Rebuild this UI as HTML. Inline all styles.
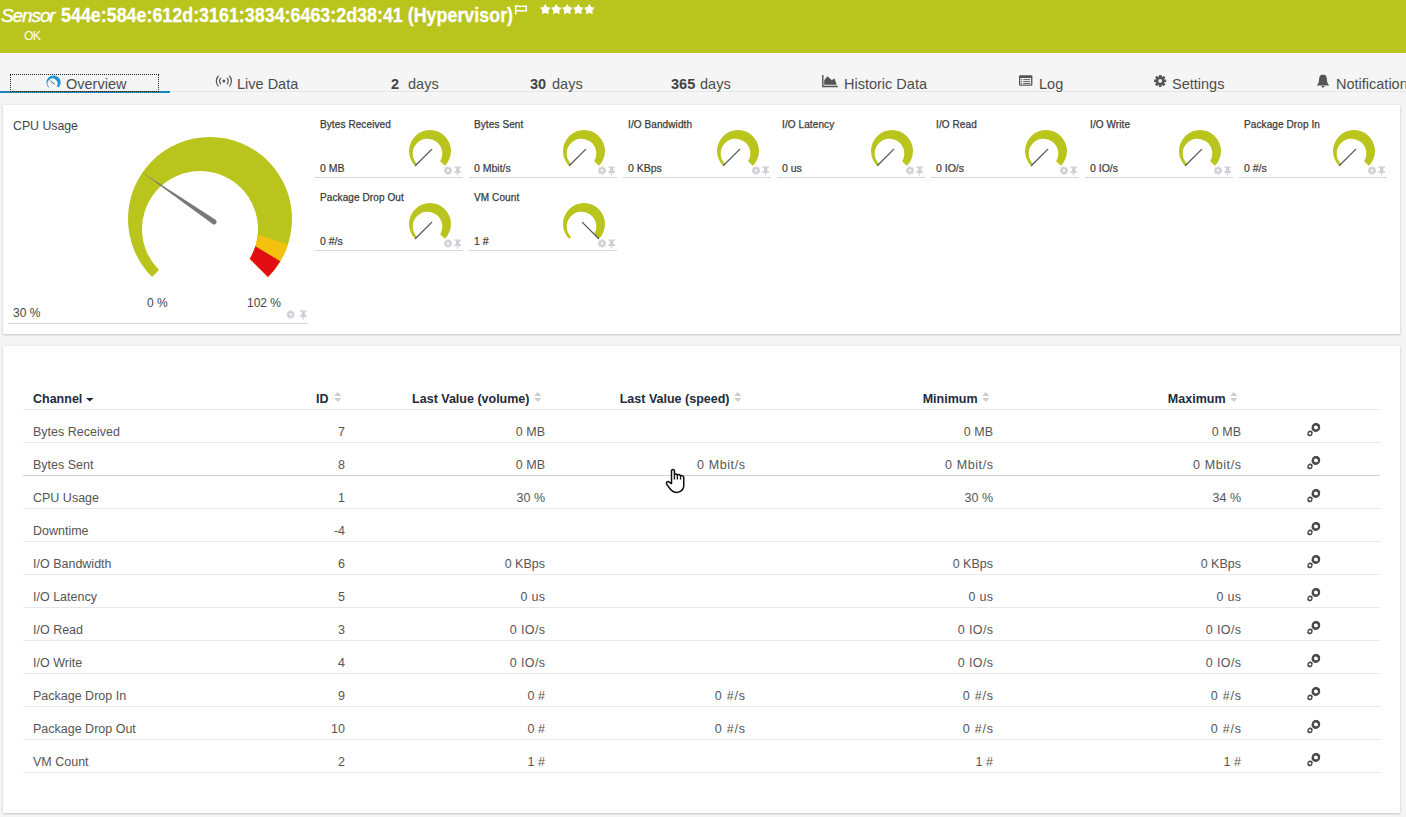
<!DOCTYPE html>
<html><head><meta charset="utf-8">
<style>
*{box-sizing:border-box}
html,body{margin:0;padding:0;width:1406px;height:817px;overflow:hidden;background:#f5f5f5;font-family:"Liberation Sans",sans-serif}
.abs{position:absolute;white-space:nowrap}
#hdr{position:absolute;left:0;top:0;width:1406px;height:53px;background:#b9c41c}
#tabs{position:absolute;left:0;top:53px;width:1406px;height:39px;background:#f5f5f5;border-bottom:1px solid #e6e6e6}
.tab{position:absolute;top:76px;font-size:14.5px;color:#4d4d4d;line-height:16px;white-space:nowrap}
.tab b{color:#444}
.panel{position:absolute;background:#fff;box-shadow:0 1px 2px rgba(0,0,0,0.17),0 0 3px rgba(0,0,0,0.07)}
.gt{position:absolute;font-size:10px;color:#3a3a3a;line-height:12px;white-space:nowrap;-webkit-text-stroke:0.25px #3a3a3a;letter-spacing:0.1px}
.gv{position:absolute;font-size:10.5px;color:#3a3a3a;line-height:12px;white-space:nowrap;-webkit-text-stroke:0.2px #3a3a3a}
.gl{position:absolute;height:1px;background:#d5d5d5}
.th{position:absolute;font-size:12.5px;font-weight:bold;color:#222b3b;line-height:14px;white-space:nowrap}
.td{position:absolute;font-size:12.5px;color:#555;line-height:14px;white-space:nowrap}
.hl{position:absolute;left:23px;width:1357px;height:1px;background:#e8e8e8}
svg{position:absolute;left:0;top:0}
</style></head><body>
<div id="hdr">
  <div class="abs" style="left:1px;top:4.5px;font-size:19px;letter-spacing:-1.1px;font-style:italic;color:#fff;line-height:22px;-webkit-text-stroke:0.35px #fff">Sensor</div>
  <div class="abs" id="ttl" style="left:61px;top:3px;font-size:19.5px;font-weight:bold;color:#fff;line-height:24px;transform-origin:0 0;transform:scaleX(0.9165);-webkit-text-stroke:0.3px #fff">544e:584e:612d:3161:3834:6463:2d38:41 (Hypervisor)</div>
  <div class="abs" style="left:24px;top:29px;font-size:12.3px;letter-spacing:-0.7px;color:#fff;line-height:14px">OK</div>
</div>
<div id="tabs"></div>
<div style="position:absolute;left:0;top:91px;width:170px;height:2px;background:#1a85b8"></div>
<div style="position:absolute;left:10px;top:74px;width:149px;height:18px;border:1px dotted #222"></div>
<div class="tab" style="left:66px">Overview</div>
<div class="tab" style="left:237px">Live Data</div>
<div class="tab" style="left:391px"><b>2</b></div><div class="tab" style="left:408px">days</div>
<div class="tab" style="left:530px"><b>30</b></div><div class="tab" style="left:552px">days</div>
<div class="tab" style="left:671px"><b>365</b></div><div class="tab" style="left:700px">days</div>
<div class="tab" style="left:844px">Historic Data</div>
<div class="tab" style="left:1039px">Log</div>
<div class="tab" style="left:1172px">Settings</div>
<div class="tab" style="left:1336px">Notifications</div>
<div class="panel" style="left:3px;top:105px;width:1397px;height:229px"></div>
<div class="panel" style="left:3px;top:346px;width:1397px;height:467px"></div>
<div class="abs" style="left:13px;top:119px;font-size:12.3px;color:#444;line-height:14px">CPU Usage</div>
<div class="abs" style="left:147px;top:296px;font-size:12px;color:#444;line-height:14px">0 %</div>
<div class="abs" style="left:247px;top:296px;font-size:12px;color:#444;line-height:14px">102 %</div>
<div class="abs" style="left:13px;top:306px;font-size:12px;color:#444;line-height:14px">30 %</div>
<div class="gl" style="left:8px;top:323px;width:300px"></div>
<div class="gt" style="left:320px;top:119px">Bytes Received</div><div class="gv" style="left:320px;top:162px">0 MB</div><div class="gl" style="left:315px;top:177px;width:148px"></div><div class="gt" style="left:474px;top:119px">Bytes Sent</div><div class="gv" style="left:474px;top:162px">0 Mbit/s</div><div class="gl" style="left:469px;top:177px;width:148px"></div><div class="gt" style="left:628px;top:119px">I/O Bandwidth</div><div class="gv" style="left:628px;top:162px">0 KBps</div><div class="gl" style="left:623px;top:177px;width:148px"></div><div class="gt" style="left:782px;top:119px">I/O Latency</div><div class="gv" style="left:782px;top:162px">0 us</div><div class="gl" style="left:777px;top:177px;width:148px"></div><div class="gt" style="left:936px;top:119px">I/O Read</div><div class="gv" style="left:936px;top:162px">0 IO/s</div><div class="gl" style="left:931px;top:177px;width:148px"></div><div class="gt" style="left:1090px;top:119px">I/O Write</div><div class="gv" style="left:1090px;top:162px">0 IO/s</div><div class="gl" style="left:1085px;top:177px;width:148px"></div><div class="gt" style="left:1244px;top:119px">Package Drop In</div><div class="gv" style="left:1244px;top:162px">0 #/s</div><div class="gl" style="left:1239px;top:177px;width:148px"></div><div class="gt" style="left:320px;top:192px">Package Drop Out</div><div class="gv" style="left:320px;top:235px">0 #/s</div><div class="gl" style="left:315px;top:250px;width:148px"></div><div class="gt" style="left:474px;top:192px">VM Count</div><div class="gv" style="left:474px;top:235px">1 #</div><div class="gl" style="left:469px;top:250px;width:148px"></div>
<div class="td" style="left:33px;top:425px">Bytes Received</div><div class="td r" style="right:1061px;top:425px">7</div><div class="td r" style="right:861px;top:425px">0 MB</div><div class="td r" style="right:413px;top:425px">0 MB</div><div class="td r" style="right:165px;top:425px">0 MB</div><div class="hl" style="top:442px"></div><div class="td" style="left:33px;top:458px">Bytes Sent</div><div class="td r" style="right:1061px;top:458px">8</div><div class="td r" style="right:861px;top:458px">0 MB</div><div class="td r" style="right:660.4px;top:458px;letter-spacing:0.6px">0 Mbit/s</div><div class="td r" style="right:412.4px;top:458px;letter-spacing:0.6px">0 Mbit/s</div><div class="td r" style="right:164.4px;top:458px;letter-spacing:0.6px">0 Mbit/s</div><div class="hl" style="top:475px;background:#cfcfcf"></div><div class="td" style="left:33px;top:491px">CPU Usage</div><div class="td r" style="right:1061px;top:491px">1</div><div class="td r" style="right:861px;top:491px">30 %</div><div class="td r" style="right:413px;top:491px">30 %</div><div class="td r" style="right:165px;top:491px">34 %</div><div class="hl" style="top:508px"></div><div class="td" style="left:33px;top:524px">Downtime</div><div class="td r" style="right:1061px;top:524px">-4</div><div class="hl" style="top:541px"></div><div class="td" style="left:33px;top:557px">I/O Bandwidth</div><div class="td r" style="right:1061px;top:557px">6</div><div class="td r" style="right:861px;top:557px">0 KBps</div><div class="td r" style="right:413px;top:557px">0 KBps</div><div class="td r" style="right:165px;top:557px">0 KBps</div><div class="hl" style="top:574px"></div><div class="td" style="left:33px;top:590px">I/O Latency</div><div class="td r" style="right:1061px;top:590px">5</div><div class="td r" style="right:860.7px;top:590px;letter-spacing:0.3px">0 us</div><div class="td r" style="right:412.7px;top:590px;letter-spacing:0.3px">0 us</div><div class="td r" style="right:164.7px;top:590px;letter-spacing:0.3px">0 us</div><div class="hl" style="top:607px"></div><div class="td" style="left:33px;top:623px">I/O Read</div><div class="td r" style="right:1061px;top:623px">3</div><div class="td r" style="right:860.6px;top:623px;letter-spacing:0.4px">0 IO/s</div><div class="td r" style="right:412.6px;top:623px;letter-spacing:0.4px">0 IO/s</div><div class="td r" style="right:164.6px;top:623px;letter-spacing:0.4px">0 IO/s</div><div class="hl" style="top:640px"></div><div class="td" style="left:33px;top:656px">I/O Write</div><div class="td r" style="right:1061px;top:656px">4</div><div class="td r" style="right:860.6px;top:656px;letter-spacing:0.4px">0 IO/s</div><div class="td r" style="right:412.6px;top:656px;letter-spacing:0.4px">0 IO/s</div><div class="td r" style="right:164.6px;top:656px;letter-spacing:0.4px">0 IO/s</div><div class="hl" style="top:673px"></div><div class="td" style="left:33px;top:689px">Package Drop In</div><div class="td r" style="right:1061px;top:689px">9</div><div class="td r" style="right:861px;top:689px">0 #</div><div class="td r" style="right:660.2px;top:689px;letter-spacing:0.8px">0 #/s</div><div class="td r" style="right:412.2px;top:689px;letter-spacing:0.8px">0 #/s</div><div class="td r" style="right:164.2px;top:689px;letter-spacing:0.8px">0 #/s</div><div class="hl" style="top:706px"></div><div class="td" style="left:33px;top:722px">Package Drop Out</div><div class="td r" style="right:1061px;top:722px">10</div><div class="td r" style="right:861px;top:722px">0 #</div><div class="td r" style="right:660.2px;top:722px;letter-spacing:0.8px">0 #/s</div><div class="td r" style="right:412.2px;top:722px;letter-spacing:0.8px">0 #/s</div><div class="td r" style="right:164.2px;top:722px;letter-spacing:0.8px">0 #/s</div><div class="hl" style="top:739px"></div><div class="td" style="left:33px;top:755px">VM Count</div><div class="td r" style="right:1061px;top:755px">2</div><div class="td r" style="right:861px;top:755px">1 #</div><div class="td r" style="right:413px;top:755px">1 #</div><div class="td r" style="right:165px;top:755px">1 #</div><div class="hl" style="top:772px"></div><div class="th r" style="right:1077.5px;top:392px">ID</div><div class="th r" style="right:876.5px;top:392px">Last Value (volume)</div><div class="th r" style="right:676.5px;top:392px">Last Value (speed)</div><div class="th r" style="right:428.5px;top:392px">Minimum</div><div class="th r" style="right:180.5px;top:392px">Maximum</div><div class="th" style="left:33px;top:392px">Channel</div><div class="hl" style="top:409px"></div>
<svg width="1406" height="817" viewBox="0 0 1406 817"><path d="M152.02,276.98 A82,82 0 1 1 267.98,276.98 L249.77,258.77 A58,58 0 1 0 158.99,270.01 Z" fill="#b9c41c"/><path d="M287.99,244.34 A82,82 0 0 1 267.98,276.98 L249.77,258.77 A58,58 0 0 0 257.74,234.51 Z" fill="#f3c10e"/><path d="M280.29,261.23 A82,82 0 0 1 267.98,276.98 L249.77,258.77 A58,58 0 0 0 255.37,246.26 Z" fill="#e30e13"/><path d="M141.53,172.09 L215.59,219.68 A2.6,2.6 0 0 1 212.66,223.97 Z" fill="#777"/><path d="M415.15,165.85 A21,21 0 1 1 444.85,165.85 L440.16,161.16 A14.8,14.8 0 1 0 417.03,163.97 Z" fill="#b9c41c"/><line x1="415.50" y1="165.50" x2="431.63" y2="149.37" stroke="#555" stroke-width="1.3" stroke-linecap="round"/><rect x="446.90" y="166.50" width="2.2" height="8.00" fill="#d0d0d6" transform="rotate(0 448 170.5)"/><rect x="446.90" y="166.50" width="2.2" height="8.00" fill="#d0d0d6" transform="rotate(45 448 170.5)"/><rect x="446.90" y="166.50" width="2.2" height="8.00" fill="#d0d0d6" transform="rotate(90 448 170.5)"/><rect x="446.90" y="166.50" width="2.2" height="8.00" fill="#d0d0d6" transform="rotate(135 448 170.5)"/><circle cx="448" cy="170.5" r="2.72" fill="#d0d0d6"/><circle cx="448" cy="170.5" r="1.20" fill="#fff"/><path d="M454.0,166.5 h7 v1.2 h-1.6 v3 l1.8,1.4 v1 h-7 v-1 l1.8,-1.4 v-3 h-1.6 z M456.9,172.1 h1.2 v3.4 h-1.2 z" fill="#d0d0d6"/><path d="M569.15,165.85 A21,21 0 1 1 598.85,165.85 L594.16,161.16 A14.8,14.8 0 1 0 571.03,163.97 Z" fill="#b9c41c"/><line x1="569.50" y1="165.50" x2="585.63" y2="149.37" stroke="#555" stroke-width="1.3" stroke-linecap="round"/><rect x="600.90" y="166.50" width="2.2" height="8.00" fill="#d0d0d6" transform="rotate(0 602 170.5)"/><rect x="600.90" y="166.50" width="2.2" height="8.00" fill="#d0d0d6" transform="rotate(45 602 170.5)"/><rect x="600.90" y="166.50" width="2.2" height="8.00" fill="#d0d0d6" transform="rotate(90 602 170.5)"/><rect x="600.90" y="166.50" width="2.2" height="8.00" fill="#d0d0d6" transform="rotate(135 602 170.5)"/><circle cx="602" cy="170.5" r="2.72" fill="#d0d0d6"/><circle cx="602" cy="170.5" r="1.20" fill="#fff"/><path d="M608.0,166.5 h7 v1.2 h-1.6 v3 l1.8,1.4 v1 h-7 v-1 l1.8,-1.4 v-3 h-1.6 z M610.9,172.1 h1.2 v3.4 h-1.2 z" fill="#d0d0d6"/><path d="M723.15,165.85 A21,21 0 1 1 752.85,165.85 L748.16,161.16 A14.8,14.8 0 1 0 725.03,163.97 Z" fill="#b9c41c"/><line x1="723.50" y1="165.50" x2="739.63" y2="149.37" stroke="#555" stroke-width="1.3" stroke-linecap="round"/><rect x="754.90" y="166.50" width="2.2" height="8.00" fill="#d0d0d6" transform="rotate(0 756 170.5)"/><rect x="754.90" y="166.50" width="2.2" height="8.00" fill="#d0d0d6" transform="rotate(45 756 170.5)"/><rect x="754.90" y="166.50" width="2.2" height="8.00" fill="#d0d0d6" transform="rotate(90 756 170.5)"/><rect x="754.90" y="166.50" width="2.2" height="8.00" fill="#d0d0d6" transform="rotate(135 756 170.5)"/><circle cx="756" cy="170.5" r="2.72" fill="#d0d0d6"/><circle cx="756" cy="170.5" r="1.20" fill="#fff"/><path d="M762.0,166.5 h7 v1.2 h-1.6 v3 l1.8,1.4 v1 h-7 v-1 l1.8,-1.4 v-3 h-1.6 z M764.9,172.1 h1.2 v3.4 h-1.2 z" fill="#d0d0d6"/><path d="M877.15,165.85 A21,21 0 1 1 906.85,165.85 L902.16,161.16 A14.8,14.8 0 1 0 879.03,163.97 Z" fill="#b9c41c"/><line x1="877.50" y1="165.50" x2="893.63" y2="149.37" stroke="#555" stroke-width="1.3" stroke-linecap="round"/><rect x="908.90" y="166.50" width="2.2" height="8.00" fill="#d0d0d6" transform="rotate(0 910 170.5)"/><rect x="908.90" y="166.50" width="2.2" height="8.00" fill="#d0d0d6" transform="rotate(45 910 170.5)"/><rect x="908.90" y="166.50" width="2.2" height="8.00" fill="#d0d0d6" transform="rotate(90 910 170.5)"/><rect x="908.90" y="166.50" width="2.2" height="8.00" fill="#d0d0d6" transform="rotate(135 910 170.5)"/><circle cx="910" cy="170.5" r="2.72" fill="#d0d0d6"/><circle cx="910" cy="170.5" r="1.20" fill="#fff"/><path d="M916.0,166.5 h7 v1.2 h-1.6 v3 l1.8,1.4 v1 h-7 v-1 l1.8,-1.4 v-3 h-1.6 z M918.9,172.1 h1.2 v3.4 h-1.2 z" fill="#d0d0d6"/><path d="M1031.15,165.85 A21,21 0 1 1 1060.85,165.85 L1056.16,161.16 A14.8,14.8 0 1 0 1033.03,163.97 Z" fill="#b9c41c"/><line x1="1031.50" y1="165.50" x2="1047.63" y2="149.37" stroke="#555" stroke-width="1.3" stroke-linecap="round"/><rect x="1062.90" y="166.50" width="2.2" height="8.00" fill="#d0d0d6" transform="rotate(0 1064 170.5)"/><rect x="1062.90" y="166.50" width="2.2" height="8.00" fill="#d0d0d6" transform="rotate(45 1064 170.5)"/><rect x="1062.90" y="166.50" width="2.2" height="8.00" fill="#d0d0d6" transform="rotate(90 1064 170.5)"/><rect x="1062.90" y="166.50" width="2.2" height="8.00" fill="#d0d0d6" transform="rotate(135 1064 170.5)"/><circle cx="1064" cy="170.5" r="2.72" fill="#d0d0d6"/><circle cx="1064" cy="170.5" r="1.20" fill="#fff"/><path d="M1070.0,166.5 h7 v1.2 h-1.6 v3 l1.8,1.4 v1 h-7 v-1 l1.8,-1.4 v-3 h-1.6 z M1072.9,172.1 h1.2 v3.4 h-1.2 z" fill="#d0d0d6"/><path d="M1185.15,165.85 A21,21 0 1 1 1214.85,165.85 L1210.16,161.16 A14.8,14.8 0 1 0 1187.03,163.97 Z" fill="#b9c41c"/><line x1="1185.50" y1="165.50" x2="1201.63" y2="149.37" stroke="#555" stroke-width="1.3" stroke-linecap="round"/><rect x="1216.90" y="166.50" width="2.2" height="8.00" fill="#d0d0d6" transform="rotate(0 1218 170.5)"/><rect x="1216.90" y="166.50" width="2.2" height="8.00" fill="#d0d0d6" transform="rotate(45 1218 170.5)"/><rect x="1216.90" y="166.50" width="2.2" height="8.00" fill="#d0d0d6" transform="rotate(90 1218 170.5)"/><rect x="1216.90" y="166.50" width="2.2" height="8.00" fill="#d0d0d6" transform="rotate(135 1218 170.5)"/><circle cx="1218" cy="170.5" r="2.72" fill="#d0d0d6"/><circle cx="1218" cy="170.5" r="1.20" fill="#fff"/><path d="M1224.0,166.5 h7 v1.2 h-1.6 v3 l1.8,1.4 v1 h-7 v-1 l1.8,-1.4 v-3 h-1.6 z M1226.9,172.1 h1.2 v3.4 h-1.2 z" fill="#d0d0d6"/><path d="M1339.15,165.85 A21,21 0 1 1 1368.85,165.85 L1364.16,161.16 A14.8,14.8 0 1 0 1341.03,163.97 Z" fill="#b9c41c"/><line x1="1339.50" y1="165.50" x2="1355.63" y2="149.37" stroke="#555" stroke-width="1.3" stroke-linecap="round"/><rect x="1370.90" y="166.50" width="2.2" height="8.00" fill="#d0d0d6" transform="rotate(0 1372 170.5)"/><rect x="1370.90" y="166.50" width="2.2" height="8.00" fill="#d0d0d6" transform="rotate(45 1372 170.5)"/><rect x="1370.90" y="166.50" width="2.2" height="8.00" fill="#d0d0d6" transform="rotate(90 1372 170.5)"/><rect x="1370.90" y="166.50" width="2.2" height="8.00" fill="#d0d0d6" transform="rotate(135 1372 170.5)"/><circle cx="1372" cy="170.5" r="2.72" fill="#d0d0d6"/><circle cx="1372" cy="170.5" r="1.20" fill="#fff"/><path d="M1378.0,166.5 h7 v1.2 h-1.6 v3 l1.8,1.4 v1 h-7 v-1 l1.8,-1.4 v-3 h-1.6 z M1380.9,172.1 h1.2 v3.4 h-1.2 z" fill="#d0d0d6"/><path d="M415.15,238.85 A21,21 0 1 1 444.85,238.85 L440.16,234.16 A14.8,14.8 0 1 0 417.03,236.97 Z" fill="#b9c41c"/><line x1="415.50" y1="238.50" x2="431.63" y2="222.37" stroke="#555" stroke-width="1.3" stroke-linecap="round"/><rect x="446.90" y="239.50" width="2.2" height="8.00" fill="#d0d0d6" transform="rotate(0 448 243.5)"/><rect x="446.90" y="239.50" width="2.2" height="8.00" fill="#d0d0d6" transform="rotate(45 448 243.5)"/><rect x="446.90" y="239.50" width="2.2" height="8.00" fill="#d0d0d6" transform="rotate(90 448 243.5)"/><rect x="446.90" y="239.50" width="2.2" height="8.00" fill="#d0d0d6" transform="rotate(135 448 243.5)"/><circle cx="448" cy="243.5" r="2.72" fill="#d0d0d6"/><circle cx="448" cy="243.5" r="1.20" fill="#fff"/><path d="M454.0,239.5 h7 v1.2 h-1.6 v3 l1.8,1.4 v1 h-7 v-1 l1.8,-1.4 v-3 h-1.6 z M456.9,245.1 h1.2 v3.4 h-1.2 z" fill="#d0d0d6"/><path d="M569.15,238.85 A21,21 0 1 1 598.85,238.85 L594.16,234.16 A14.8,14.8 0 1 0 571.03,236.97 Z" fill="#b9c41c"/><line x1="598.50" y1="238.50" x2="582.37" y2="222.37" stroke="#555" stroke-width="1.3" stroke-linecap="round"/><rect x="600.90" y="239.50" width="2.2" height="8.00" fill="#d0d0d6" transform="rotate(0 602 243.5)"/><rect x="600.90" y="239.50" width="2.2" height="8.00" fill="#d0d0d6" transform="rotate(45 602 243.5)"/><rect x="600.90" y="239.50" width="2.2" height="8.00" fill="#d0d0d6" transform="rotate(90 602 243.5)"/><rect x="600.90" y="239.50" width="2.2" height="8.00" fill="#d0d0d6" transform="rotate(135 602 243.5)"/><circle cx="602" cy="243.5" r="2.72" fill="#d0d0d6"/><circle cx="602" cy="243.5" r="1.20" fill="#fff"/><path d="M608.0,239.5 h7 v1.2 h-1.6 v3 l1.8,1.4 v1 h-7 v-1 l1.8,-1.4 v-3 h-1.6 z M610.9,245.1 h1.2 v3.4 h-1.2 z" fill="#d0d0d6"/><rect x="289.50" y="310.50" width="2.2" height="8.00" fill="#d0d0d6" transform="rotate(0 290.6 314.5)"/><rect x="289.50" y="310.50" width="2.2" height="8.00" fill="#d0d0d6" transform="rotate(45 290.6 314.5)"/><rect x="289.50" y="310.50" width="2.2" height="8.00" fill="#d0d0d6" transform="rotate(90 290.6 314.5)"/><rect x="289.50" y="310.50" width="2.2" height="8.00" fill="#d0d0d6" transform="rotate(135 290.6 314.5)"/><circle cx="290.6" cy="314.5" r="2.72" fill="#d0d0d6"/><circle cx="290.6" cy="314.5" r="1.20" fill="#fff"/><path d="M299.7,310.5 h7 v1.2 h-1.6 v3 l1.8,1.4 v1 h-7 v-1 l1.8,-1.4 v-3 h-1.6 z M302.59999999999997,316.1 h1.2 v3.4 h-1.2 z" fill="#d0d0d6"/><circle cx="1315.9" cy="427.4" r="3.1" fill="none" stroke="#4a4a4a" stroke-width="2.4"/><rect x="1315.20" y="422.90" width="1.4" height="9.00" fill="#4a4a4a" transform="rotate(0.0 1315.9 427.4)"/><rect x="1315.20" y="422.90" width="1.4" height="9.00" fill="#4a4a4a" transform="rotate(22.5 1315.9 427.4)"/><rect x="1315.20" y="422.90" width="1.4" height="9.00" fill="#4a4a4a" transform="rotate(45.0 1315.9 427.4)"/><rect x="1315.20" y="422.90" width="1.4" height="9.00" fill="#4a4a4a" transform="rotate(67.5 1315.9 427.4)"/><circle cx="1315.9" cy="427.4" r="1.89" fill="#fff"/><circle cx="1310" cy="433.4" r="1.8" fill="none" stroke="#4a4a4a" stroke-width="1.5"/><rect x="1309.30" y="430.50" width="1.4" height="5.80" fill="#4a4a4a" transform="rotate(0.0 1310 433.4)"/><rect x="1309.30" y="430.50" width="1.4" height="5.80" fill="#4a4a4a" transform="rotate(30.0 1310 433.4)"/><rect x="1309.30" y="430.50" width="1.4" height="5.80" fill="#4a4a4a" transform="rotate(60.0 1310 433.4)"/><circle cx="1310" cy="433.4" r="1.22" fill="#fff"/><circle cx="1315.9" cy="460.4" r="3.1" fill="none" stroke="#4a4a4a" stroke-width="2.4"/><rect x="1315.20" y="455.90" width="1.4" height="9.00" fill="#4a4a4a" transform="rotate(0.0 1315.9 460.4)"/><rect x="1315.20" y="455.90" width="1.4" height="9.00" fill="#4a4a4a" transform="rotate(22.5 1315.9 460.4)"/><rect x="1315.20" y="455.90" width="1.4" height="9.00" fill="#4a4a4a" transform="rotate(45.0 1315.9 460.4)"/><rect x="1315.20" y="455.90" width="1.4" height="9.00" fill="#4a4a4a" transform="rotate(67.5 1315.9 460.4)"/><circle cx="1315.9" cy="460.4" r="1.89" fill="#fff"/><circle cx="1310" cy="466.4" r="1.8" fill="none" stroke="#4a4a4a" stroke-width="1.5"/><rect x="1309.30" y="463.50" width="1.4" height="5.80" fill="#4a4a4a" transform="rotate(0.0 1310 466.4)"/><rect x="1309.30" y="463.50" width="1.4" height="5.80" fill="#4a4a4a" transform="rotate(30.0 1310 466.4)"/><rect x="1309.30" y="463.50" width="1.4" height="5.80" fill="#4a4a4a" transform="rotate(60.0 1310 466.4)"/><circle cx="1310" cy="466.4" r="1.22" fill="#fff"/><circle cx="1315.9" cy="493.4" r="3.1" fill="none" stroke="#4a4a4a" stroke-width="2.4"/><rect x="1315.20" y="488.90" width="1.4" height="9.00" fill="#4a4a4a" transform="rotate(0.0 1315.9 493.4)"/><rect x="1315.20" y="488.90" width="1.4" height="9.00" fill="#4a4a4a" transform="rotate(22.5 1315.9 493.4)"/><rect x="1315.20" y="488.90" width="1.4" height="9.00" fill="#4a4a4a" transform="rotate(45.0 1315.9 493.4)"/><rect x="1315.20" y="488.90" width="1.4" height="9.00" fill="#4a4a4a" transform="rotate(67.5 1315.9 493.4)"/><circle cx="1315.9" cy="493.4" r="1.89" fill="#fff"/><circle cx="1310" cy="499.4" r="1.8" fill="none" stroke="#4a4a4a" stroke-width="1.5"/><rect x="1309.30" y="496.50" width="1.4" height="5.80" fill="#4a4a4a" transform="rotate(0.0 1310 499.4)"/><rect x="1309.30" y="496.50" width="1.4" height="5.80" fill="#4a4a4a" transform="rotate(30.0 1310 499.4)"/><rect x="1309.30" y="496.50" width="1.4" height="5.80" fill="#4a4a4a" transform="rotate(60.0 1310 499.4)"/><circle cx="1310" cy="499.4" r="1.22" fill="#fff"/><circle cx="1315.9" cy="526.4" r="3.1" fill="none" stroke="#4a4a4a" stroke-width="2.4"/><rect x="1315.20" y="521.90" width="1.4" height="9.00" fill="#4a4a4a" transform="rotate(0.0 1315.9 526.4)"/><rect x="1315.20" y="521.90" width="1.4" height="9.00" fill="#4a4a4a" transform="rotate(22.5 1315.9 526.4)"/><rect x="1315.20" y="521.90" width="1.4" height="9.00" fill="#4a4a4a" transform="rotate(45.0 1315.9 526.4)"/><rect x="1315.20" y="521.90" width="1.4" height="9.00" fill="#4a4a4a" transform="rotate(67.5 1315.9 526.4)"/><circle cx="1315.9" cy="526.4" r="1.89" fill="#fff"/><circle cx="1310" cy="532.4" r="1.8" fill="none" stroke="#4a4a4a" stroke-width="1.5"/><rect x="1309.30" y="529.50" width="1.4" height="5.80" fill="#4a4a4a" transform="rotate(0.0 1310 532.4)"/><rect x="1309.30" y="529.50" width="1.4" height="5.80" fill="#4a4a4a" transform="rotate(30.0 1310 532.4)"/><rect x="1309.30" y="529.50" width="1.4" height="5.80" fill="#4a4a4a" transform="rotate(60.0 1310 532.4)"/><circle cx="1310" cy="532.4" r="1.22" fill="#fff"/><circle cx="1315.9" cy="559.4" r="3.1" fill="none" stroke="#4a4a4a" stroke-width="2.4"/><rect x="1315.20" y="554.90" width="1.4" height="9.00" fill="#4a4a4a" transform="rotate(0.0 1315.9 559.4)"/><rect x="1315.20" y="554.90" width="1.4" height="9.00" fill="#4a4a4a" transform="rotate(22.5 1315.9 559.4)"/><rect x="1315.20" y="554.90" width="1.4" height="9.00" fill="#4a4a4a" transform="rotate(45.0 1315.9 559.4)"/><rect x="1315.20" y="554.90" width="1.4" height="9.00" fill="#4a4a4a" transform="rotate(67.5 1315.9 559.4)"/><circle cx="1315.9" cy="559.4" r="1.89" fill="#fff"/><circle cx="1310" cy="565.4" r="1.8" fill="none" stroke="#4a4a4a" stroke-width="1.5"/><rect x="1309.30" y="562.50" width="1.4" height="5.80" fill="#4a4a4a" transform="rotate(0.0 1310 565.4)"/><rect x="1309.30" y="562.50" width="1.4" height="5.80" fill="#4a4a4a" transform="rotate(30.0 1310 565.4)"/><rect x="1309.30" y="562.50" width="1.4" height="5.80" fill="#4a4a4a" transform="rotate(60.0 1310 565.4)"/><circle cx="1310" cy="565.4" r="1.22" fill="#fff"/><circle cx="1315.9" cy="592.4" r="3.1" fill="none" stroke="#4a4a4a" stroke-width="2.4"/><rect x="1315.20" y="587.90" width="1.4" height="9.00" fill="#4a4a4a" transform="rotate(0.0 1315.9 592.4)"/><rect x="1315.20" y="587.90" width="1.4" height="9.00" fill="#4a4a4a" transform="rotate(22.5 1315.9 592.4)"/><rect x="1315.20" y="587.90" width="1.4" height="9.00" fill="#4a4a4a" transform="rotate(45.0 1315.9 592.4)"/><rect x="1315.20" y="587.90" width="1.4" height="9.00" fill="#4a4a4a" transform="rotate(67.5 1315.9 592.4)"/><circle cx="1315.9" cy="592.4" r="1.89" fill="#fff"/><circle cx="1310" cy="598.4" r="1.8" fill="none" stroke="#4a4a4a" stroke-width="1.5"/><rect x="1309.30" y="595.50" width="1.4" height="5.80" fill="#4a4a4a" transform="rotate(0.0 1310 598.4)"/><rect x="1309.30" y="595.50" width="1.4" height="5.80" fill="#4a4a4a" transform="rotate(30.0 1310 598.4)"/><rect x="1309.30" y="595.50" width="1.4" height="5.80" fill="#4a4a4a" transform="rotate(60.0 1310 598.4)"/><circle cx="1310" cy="598.4" r="1.22" fill="#fff"/><circle cx="1315.9" cy="625.4" r="3.1" fill="none" stroke="#4a4a4a" stroke-width="2.4"/><rect x="1315.20" y="620.90" width="1.4" height="9.00" fill="#4a4a4a" transform="rotate(0.0 1315.9 625.4)"/><rect x="1315.20" y="620.90" width="1.4" height="9.00" fill="#4a4a4a" transform="rotate(22.5 1315.9 625.4)"/><rect x="1315.20" y="620.90" width="1.4" height="9.00" fill="#4a4a4a" transform="rotate(45.0 1315.9 625.4)"/><rect x="1315.20" y="620.90" width="1.4" height="9.00" fill="#4a4a4a" transform="rotate(67.5 1315.9 625.4)"/><circle cx="1315.9" cy="625.4" r="1.89" fill="#fff"/><circle cx="1310" cy="631.4" r="1.8" fill="none" stroke="#4a4a4a" stroke-width="1.5"/><rect x="1309.30" y="628.50" width="1.4" height="5.80" fill="#4a4a4a" transform="rotate(0.0 1310 631.4)"/><rect x="1309.30" y="628.50" width="1.4" height="5.80" fill="#4a4a4a" transform="rotate(30.0 1310 631.4)"/><rect x="1309.30" y="628.50" width="1.4" height="5.80" fill="#4a4a4a" transform="rotate(60.0 1310 631.4)"/><circle cx="1310" cy="631.4" r="1.22" fill="#fff"/><circle cx="1315.9" cy="658.4" r="3.1" fill="none" stroke="#4a4a4a" stroke-width="2.4"/><rect x="1315.20" y="653.90" width="1.4" height="9.00" fill="#4a4a4a" transform="rotate(0.0 1315.9 658.4)"/><rect x="1315.20" y="653.90" width="1.4" height="9.00" fill="#4a4a4a" transform="rotate(22.5 1315.9 658.4)"/><rect x="1315.20" y="653.90" width="1.4" height="9.00" fill="#4a4a4a" transform="rotate(45.0 1315.9 658.4)"/><rect x="1315.20" y="653.90" width="1.4" height="9.00" fill="#4a4a4a" transform="rotate(67.5 1315.9 658.4)"/><circle cx="1315.9" cy="658.4" r="1.89" fill="#fff"/><circle cx="1310" cy="664.4" r="1.8" fill="none" stroke="#4a4a4a" stroke-width="1.5"/><rect x="1309.30" y="661.50" width="1.4" height="5.80" fill="#4a4a4a" transform="rotate(0.0 1310 664.4)"/><rect x="1309.30" y="661.50" width="1.4" height="5.80" fill="#4a4a4a" transform="rotate(30.0 1310 664.4)"/><rect x="1309.30" y="661.50" width="1.4" height="5.80" fill="#4a4a4a" transform="rotate(60.0 1310 664.4)"/><circle cx="1310" cy="664.4" r="1.22" fill="#fff"/><circle cx="1315.9" cy="691.4" r="3.1" fill="none" stroke="#4a4a4a" stroke-width="2.4"/><rect x="1315.20" y="686.90" width="1.4" height="9.00" fill="#4a4a4a" transform="rotate(0.0 1315.9 691.4)"/><rect x="1315.20" y="686.90" width="1.4" height="9.00" fill="#4a4a4a" transform="rotate(22.5 1315.9 691.4)"/><rect x="1315.20" y="686.90" width="1.4" height="9.00" fill="#4a4a4a" transform="rotate(45.0 1315.9 691.4)"/><rect x="1315.20" y="686.90" width="1.4" height="9.00" fill="#4a4a4a" transform="rotate(67.5 1315.9 691.4)"/><circle cx="1315.9" cy="691.4" r="1.89" fill="#fff"/><circle cx="1310" cy="697.4" r="1.8" fill="none" stroke="#4a4a4a" stroke-width="1.5"/><rect x="1309.30" y="694.50" width="1.4" height="5.80" fill="#4a4a4a" transform="rotate(0.0 1310 697.4)"/><rect x="1309.30" y="694.50" width="1.4" height="5.80" fill="#4a4a4a" transform="rotate(30.0 1310 697.4)"/><rect x="1309.30" y="694.50" width="1.4" height="5.80" fill="#4a4a4a" transform="rotate(60.0 1310 697.4)"/><circle cx="1310" cy="697.4" r="1.22" fill="#fff"/><circle cx="1315.9" cy="724.4" r="3.1" fill="none" stroke="#4a4a4a" stroke-width="2.4"/><rect x="1315.20" y="719.90" width="1.4" height="9.00" fill="#4a4a4a" transform="rotate(0.0 1315.9 724.4)"/><rect x="1315.20" y="719.90" width="1.4" height="9.00" fill="#4a4a4a" transform="rotate(22.5 1315.9 724.4)"/><rect x="1315.20" y="719.90" width="1.4" height="9.00" fill="#4a4a4a" transform="rotate(45.0 1315.9 724.4)"/><rect x="1315.20" y="719.90" width="1.4" height="9.00" fill="#4a4a4a" transform="rotate(67.5 1315.9 724.4)"/><circle cx="1315.9" cy="724.4" r="1.89" fill="#fff"/><circle cx="1310" cy="730.4" r="1.8" fill="none" stroke="#4a4a4a" stroke-width="1.5"/><rect x="1309.30" y="727.50" width="1.4" height="5.80" fill="#4a4a4a" transform="rotate(0.0 1310 730.4)"/><rect x="1309.30" y="727.50" width="1.4" height="5.80" fill="#4a4a4a" transform="rotate(30.0 1310 730.4)"/><rect x="1309.30" y="727.50" width="1.4" height="5.80" fill="#4a4a4a" transform="rotate(60.0 1310 730.4)"/><circle cx="1310" cy="730.4" r="1.22" fill="#fff"/><circle cx="1315.9" cy="757.4" r="3.1" fill="none" stroke="#4a4a4a" stroke-width="2.4"/><rect x="1315.20" y="752.90" width="1.4" height="9.00" fill="#4a4a4a" transform="rotate(0.0 1315.9 757.4)"/><rect x="1315.20" y="752.90" width="1.4" height="9.00" fill="#4a4a4a" transform="rotate(22.5 1315.9 757.4)"/><rect x="1315.20" y="752.90" width="1.4" height="9.00" fill="#4a4a4a" transform="rotate(45.0 1315.9 757.4)"/><rect x="1315.20" y="752.90" width="1.4" height="9.00" fill="#4a4a4a" transform="rotate(67.5 1315.9 757.4)"/><circle cx="1315.9" cy="757.4" r="1.89" fill="#fff"/><circle cx="1310" cy="763.4" r="1.8" fill="none" stroke="#4a4a4a" stroke-width="1.5"/><rect x="1309.30" y="760.50" width="1.4" height="5.80" fill="#4a4a4a" transform="rotate(0.0 1310 763.4)"/><rect x="1309.30" y="760.50" width="1.4" height="5.80" fill="#4a4a4a" transform="rotate(30.0 1310 763.4)"/><rect x="1309.30" y="760.50" width="1.4" height="5.80" fill="#4a4a4a" transform="rotate(60.0 1310 763.4)"/><circle cx="1310" cy="763.4" r="1.22" fill="#fff"/><path d="M334,396 l3.8,-4 l3.8,4 z M334,398 l3.8,4 l3.8,-4 z" fill="#cfcfcf"/><path d="M534,396 l3.8,-4 l3.8,4 z M534,398 l3.8,4 l3.8,-4 z" fill="#cfcfcf"/><path d="M734,396 l3.8,-4 l3.8,4 z M734,398 l3.8,4 l3.8,-4 z" fill="#cfcfcf"/><path d="M982,396 l3.8,-4 l3.8,4 z M982,398 l3.8,4 l3.8,-4 z" fill="#cfcfcf"/><path d="M1230,396 l3.8,-4 l3.8,4 z M1230,398 l3.8,4 l3.8,-4 z" fill="#cfcfcf"/><path d="M86,398 h7.6 l-3.8,3.6 z" fill="#1c2536"/><path d="M515.7,5 v9.5" stroke="#fff" stroke-width="1.6"/><path d="M516,6.2 c2,-1 4,1 6,0 l4.3,0 v4.6 l-4.3,0 c-2,1 -4,-1 -6,0" fill="none" stroke="#fff" stroke-width="1.4"/><polygon points="545.30,4.00 543.42,7.01 539.97,7.87 542.26,10.59 542.01,14.13 545.30,12.80 548.59,14.13 548.34,10.59 550.63,7.87 547.18,7.01" fill="#fff"/><polygon points="556.30,4.00 554.42,7.01 550.97,7.87 553.26,10.59 553.01,14.13 556.30,12.80 559.59,14.13 559.34,10.59 561.63,7.87 558.18,7.01" fill="#fff"/><polygon points="567.30,4.00 565.42,7.01 561.97,7.87 564.26,10.59 564.01,14.13 567.30,12.80 570.59,14.13 570.34,10.59 572.63,7.87 569.18,7.01" fill="#fff"/><polygon points="578.30,4.00 576.42,7.01 572.97,7.87 575.26,10.59 575.01,14.13 578.30,12.80 581.59,14.13 581.34,10.59 583.63,7.87 580.18,7.01" fill="#fff"/><polygon points="589.30,4.00 587.42,7.01 583.97,7.87 586.26,10.59 586.01,14.13 589.30,12.80 592.59,14.13 592.34,10.59 594.63,7.87 591.18,7.01" fill="#fff"/><path d="M48.48,87.62 A7.1,7.1 0 1 1 58.52,87.62 L56.92,86.02 A5.0,5.0 0 1 0 49.06,87.04 Z" fill="#1d93cf"/><line x1="50.3" y1="80.8" x2="54.8" y2="84.4" stroke="#556" stroke-width="1"/><circle cx="223.9" cy="81.1" r="1.5" fill="#555"/><path d="M220.9,78 a4.3,4.3 0 0 0 0,6.2 M226.9,78 a4.3,4.3 0 0 1 0,6.2 M218.6,75.8 a7.3,7.3 0 0 0 0,10.6 M229.2,75.8 a7.3,7.3 0 0 1 0,10.6" fill="none" stroke="#555" stroke-width="1.2"/><path d="M822.8,75 v11.5 h15" fill="none" stroke="#555" stroke-width="1.4"/><path d="M824.2,84.8 v-4.5 l3.2,-4 l4.5,4 l2.5,-2 l2.3,6.5 z" fill="#555"/><rect x="1019" y="75.2" width="13.4" height="10.5" rx="1" fill="#555"/><rect x="1020.3" y="78" width="10.8" height="6.6" fill="#f5f5f5"/><path d="M1021,79.6 h1.2 M1023.3,79.6 h6.9 M1021,81.6 h1.2 M1023.3,81.6 h6.9 M1021,83.5 h1.2 M1023.3,83.5 h6.9" stroke="#555" stroke-width="0.9"/><rect x="1159" y="75" width="2.4" height="11.8" fill="#555" transform="rotate(0 1160.2 80.9)"/><rect x="1159" y="75" width="2.4" height="11.8" fill="#555" transform="rotate(45 1160.2 80.9)"/><rect x="1159" y="75" width="2.4" height="11.8" fill="#555" transform="rotate(90 1160.2 80.9)"/><rect x="1159" y="75" width="2.4" height="11.8" fill="#555" transform="rotate(135 1160.2 80.9)"/><rect x="1159" y="75" width="2.4" height="11.8" fill="#555" transform="rotate(180 1160.2 80.9)"/><rect x="1159" y="75" width="2.4" height="11.8" fill="#555" transform="rotate(225 1160.2 80.9)"/><rect x="1159" y="75" width="2.4" height="11.8" fill="#555" transform="rotate(270 1160.2 80.9)"/><rect x="1159" y="75" width="2.4" height="11.8" fill="#555" transform="rotate(315 1160.2 80.9)"/><circle cx="1160.2" cy="80.9" r="4.3" fill="#555"/><circle cx="1160.2" cy="80.9" r="1.9" fill="#f5f5f5"/><path d="M1323,74.3 c-2.6,0 -3.9,2.3 -3.9,4.8 c0,3.5 -1,5 -2.4,6.5 h12.6 c-1.4,-1.5 -2.4,-3 -2.4,-6.5 c0,-2.5 -1.3,-4.8 -3.9,-4.8 z M1321.4,86 a1.6,1.6 0 0 0 3.2,0 z" fill="#555"/><g transform="translate(660,460) scale(0.04896)"><path d="M235,480 L235,215 Q265,175 295,215 L295,295 Q325,275 355,305 Q388,285 420,322 Q455,305 485,345 L485,540 Q470,645 350,662 Q258,662 200,582 L135,492 Q118,445 170,440 L235,480 Z" fill="#fff" stroke="#111" stroke-width="31" stroke-linejoin="round"/><path d="M295,295 V400 M355,305 V400 M420,322 V400" stroke="#111" stroke-width="27" fill="none"/></g></svg>
</body></html>
